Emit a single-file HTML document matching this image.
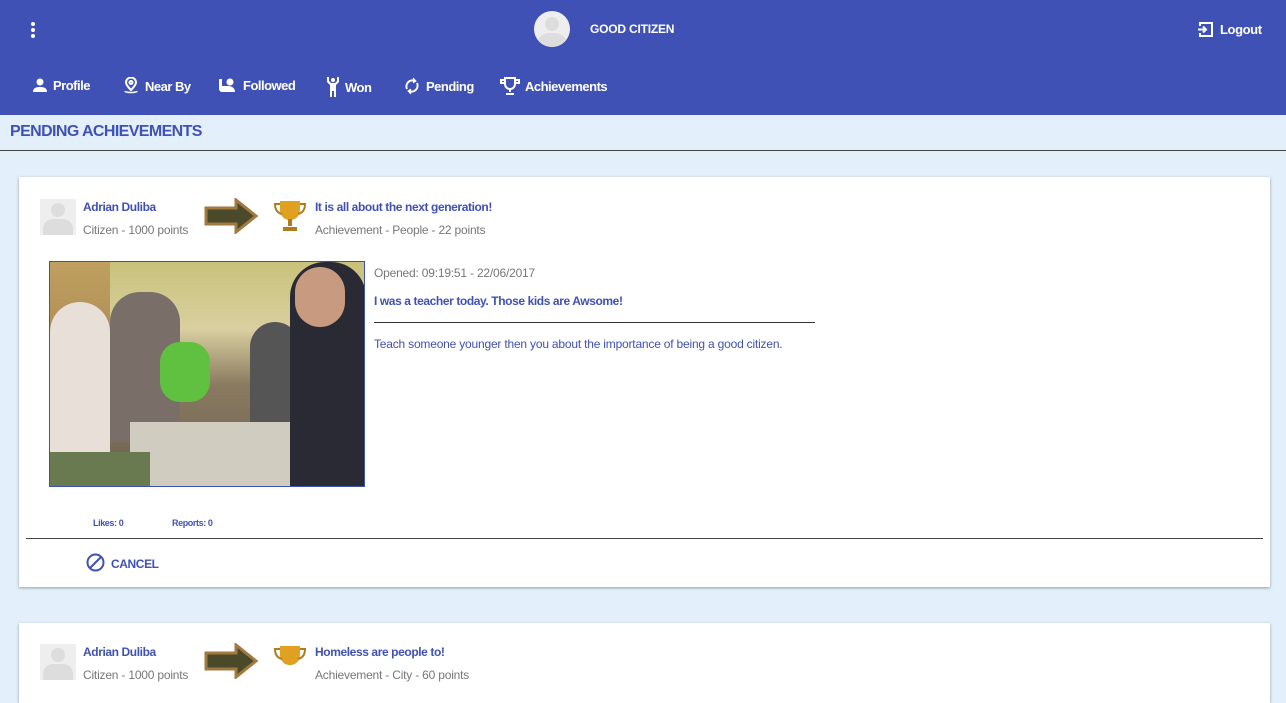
<!DOCTYPE html>
<html><head><style>
*{box-sizing:border-box;margin:0;padding:0}
body{width:1286px;height:674px;overflow:hidden;background:#e3f0fb;font-family:"Liberation Sans",Arial,sans-serif;position:relative;letter-spacing:-0.2px}
.hdr{position:absolute;left:0;top:0;width:1286px;height:115px;background:#3f51b5;color:#fff}
.abs{position:absolute}
.nav{position:absolute;top:77px;font-size:13px;font-weight:bold;color:#fff;display:flex;align-items:center;gap:5px;letter-spacing:-0.5px}
.title{position:absolute;left:10px;top:123px;font-size:16px;font-weight:bold;color:#3f51b5;letter-spacing:-0.6px}
.line{position:absolute;left:0;top:150px;width:1286px;height:1px;background:#444}
.card{position:absolute;left:19px;width:1251px;background:#fff;box-shadow:0 1px 3px rgba(0,0,0,.35)}
.blue{color:#3f51b5;font-weight:bold;letter-spacing:-0.4px}
.gray{color:#777}
.av{position:absolute;width:36px;height:36px;background:#eee;overflow:hidden}
.av:before{content:"";position:absolute;left:11px;top:4px;width:14px;height:14px;border-radius:50%;background:#ddd}
.av:after{content:"";position:absolute;left:3px;top:20px;width:30px;height:20px;border-radius:10px 10px 0 0;background:#ddd}
</style></head><body>
<div class="hdr">
 <div class="abs" style="left:31px;top:22px;width:4px;height:4px;border-radius:50%;background:#fff;box-shadow:0 6px 0 #fff,0 12px 0 #fff"></div>
 <div class="abs" style="left:534px;top:11px;width:36px;height:36px;border-radius:50%;background:#eee;overflow:hidden"><div class="abs" style="left:11px;top:6px;width:14px;height:14px;border-radius:50%;background:#ddd"></div><div class="abs" style="left:3px;top:22px;width:30px;height:20px;border-radius:12px 12px 0 0;background:#ddd"></div></div>
 <div class="abs" style="left:590px;top:22px;font-size:12px;font-weight:bold">GOOD CITIZEN</div>
 <svg class="abs" style="left:1197px;top:21px" width="17" height="17" viewBox="0 0 17 17" fill="none" stroke="#fff" stroke-width="2"><path d="M3 5V2h12v13H3v-3"/><path d="M1 8.5h8M6 5.5l3 3-3 3"/></svg>
 <div class="abs" style="left:1220px;top:22px;font-size:13px;font-weight:bold;letter-spacing:-0.4px">Logout</div>
 <div class="nav" style="left:32px"><svg width="16" height="16" viewBox="0 0 16 16" fill="#fff"><circle cx="8" cy="5" r="3.5"/><path d="M1 15c0-4 3-5 7-5s7 1 7 5z"/></svg>Profile</div>
 <div class="nav" style="left:122px"><svg width="18" height="18" viewBox="0 0 18 18" fill="none" stroke="#fff" stroke-width="2"><path d="M9 13C5 9 4 7 4 5.5a5 5 0 0110 0C14 7 13 9 9 13z"/><circle cx="9" cy="5.5" r="1.5"/><path d="M3 14c0 2 12 2 12 0" stroke-width="1.5"/></svg>Near By</div>
 <div class="nav" style="left:218px"><svg width="20" height="16" viewBox="0 0 20 16" fill="#fff"><path d="M1 2h3v7h6c4 0 7 2 7 6H3L1 13z"/><circle cx="12" cy="5" r="3.5"/></svg>Followed</div>
 <div class="nav" style="left:326px"><svg width="14" height="20" viewBox="0 0 14 20" fill="#fff"><circle cx="7" cy="3" r="2"/><path d="M1 0h2v4l2 2h4l2-2V0h2v5l-3 3v12H8v-6H6v6H4V8L1 5z"/></svg>Won</div>
 <div class="nav" style="left:403px"><svg width="18" height="18" viewBox="0 0 18 18" fill="none" stroke="#fff" stroke-width="2"><path d="M4 12A6 6 0 0112 4M14 6a6 6 0 01-8 8"/><path d="M10 1l3 3-3 2M8 17l-3-3 3-2" fill="#fff" stroke-width="1"/></svg>Pending</div>
 <div class="nav" style="left:500px"><svg width="20" height="18" viewBox="0 0 20 18" fill="none" stroke="#fff" stroke-width="2"><path d="M5 1h10v6a5 5 0 01-10 0z"/><path d="M5 3H1v3h4M15 3h4v3h-4M10 12v3M6 17h8"/></svg>Achievements</div>
</div>
<div class="title">PENDING ACHIEVEMENTS</div>
<div class="line"></div>

<div class="card" style="top:177px;height:410px">
 <div class="av" style="left:21px;top:22px"></div>
 <div class="abs blue" style="left:64px;top:23px;font-size:12px">Adrian Duliba</div>
 <div class="abs gray" style="left:64px;top:46px;font-size:12px">Citizen - 1000 points</div>
 <svg class="abs" style="left:184px;top:21px" width="56" height="36" viewBox="0 0 56 36"><path d="M3 10h30V2l20 16-20 16v-8H3z" fill="#4a4a2a" stroke="#a07a40" stroke-width="3"/></svg>
 <svg class="abs" style="left:253px;top:21px" width="36" height="36" viewBox="0 0 36 36"><path d="M8 3h20v8c0 7-4 11-10 11S8 18 8 11z" fill="#e0a020"/><path d="M8 6H3c0 6 3 9 7 10M28 6h5c0 6-3 9-7 10" fill="none" stroke="#b07a20" stroke-width="2"/><path d="M16 21h4v7h-4zM11 29h14v4H11z" fill="#b07a20"/></svg>
 <div class="abs blue" style="left:296px;top:23px;font-size:12px">It is all about the next generation!</div>
 <div class="abs gray" style="left:296px;top:46px;font-size:12px">Achievement - People - 22 points</div>
 <div class="abs" style="left:30px;top:84px;width:316px;height:226px;border:1px solid #3f51b5;overflow:hidden;background:linear-gradient(180deg,#c9c27a 0%,#d9cfa0 30%,#8a7a60 55%,#6a6050 100%)">
  <div class="abs" style="left:0;top:0;width:60px;height:226px;background:linear-gradient(#c0a060,#8a6a40)"></div>
  <div class="abs" style="left:0;top:40px;width:60px;height:186px;background:#e8e0d8;border-radius:30px 30px 0 0"></div>
  <div class="abs" style="left:60px;top:30px;width:70px;height:150px;background:#7a6f68;border-radius:30px 30px 0 0"></div>
  <div class="abs" style="left:110px;top:80px;width:50px;height:60px;background:#60c040;border-radius:20px"></div>
  <div class="abs" style="left:200px;top:60px;width:50px;height:166px;background:#555;border-radius:25px 25px 0 0"></div>
  <div class="abs" style="left:240px;top:0;width:76px;height:226px;background:#2a2a35;border-radius:35px 35px 0 0"></div>
  <div class="abs" style="left:245px;top:5px;width:50px;height:60px;background:#c89a80;border-radius:25px"></div>
  <div class="abs" style="left:80px;top:160px;width:160px;height:66px;background:#d0ccc0"></div>
  <div class="abs" style="left:0;top:190px;width:100px;height:36px;background:#6a7a50"></div>
 </div>
 <div class="abs gray" style="left:355px;top:89px;font-size:12px">Opened: 09:19:51 - 22/06/2017</div>
 <div class="abs blue" style="left:355px;top:117px;font-size:12px">I was a teacher today. Those kids are Awsome!</div>
 <div class="abs" style="left:355px;top:145px;width:441px;height:1px;background:#333"></div>
 <div class="abs" style="left:355px;top:160px;font-size:12px;color:#3f51b5">Teach someone younger then you about the importance of being a good citizen.</div>
 <div class="abs blue" style="left:74px;top:341px;font-size:9px">Likes: 0</div>
 <div class="abs blue" style="left:153px;top:341px;font-size:9px">Reports: 0</div>
 <div class="abs" style="left:7px;top:361px;width:1237px;height:1px;background:#444"></div>
 <svg class="abs" style="left:67px;top:376px" width="19" height="19" viewBox="0 0 19 19" fill="none" stroke="#3f51b5" stroke-width="2"><circle cx="9.5" cy="9.5" r="8"/><path d="M4 15L15 4"/></svg>
 <div class="abs blue" style="left:92px;top:380px;font-size:12px">CANCEL</div>
</div>

<div class="card" style="top:623px;height:80px">
 <div class="av" style="left:21px;top:21px"></div>
 <div class="abs blue" style="left:64px;top:22px;font-size:12px">Adrian Duliba</div>
 <div class="abs gray" style="left:64px;top:45px;font-size:12px">Citizen - 1000 points</div>
 <svg class="abs" style="left:184px;top:20px" width="56" height="36" viewBox="0 0 56 36"><path d="M3 10h30V2l20 16-20 16v-8H3z" fill="#4a4a2a" stroke="#a07a40" stroke-width="3"/></svg>
 <svg class="abs" style="left:253px;top:20px" width="36" height="36" viewBox="0 0 36 36"><path d="M8 3h20v8c0 7-4 11-10 11S8 18 8 11z" fill="#e0a020"/><path d="M8 6H3c0 6 3 9 7 10M28 6h5c0 6-3 9-7 10" fill="none" stroke="#b07a20" stroke-width="2"/></svg>
 <div class="abs blue" style="left:296px;top:22px;font-size:12px">Homeless are people to!</div>
 <div class="abs gray" style="left:296px;top:45px;font-size:12px">Achievement - City - 60 points</div>
</div>
</body></html>
